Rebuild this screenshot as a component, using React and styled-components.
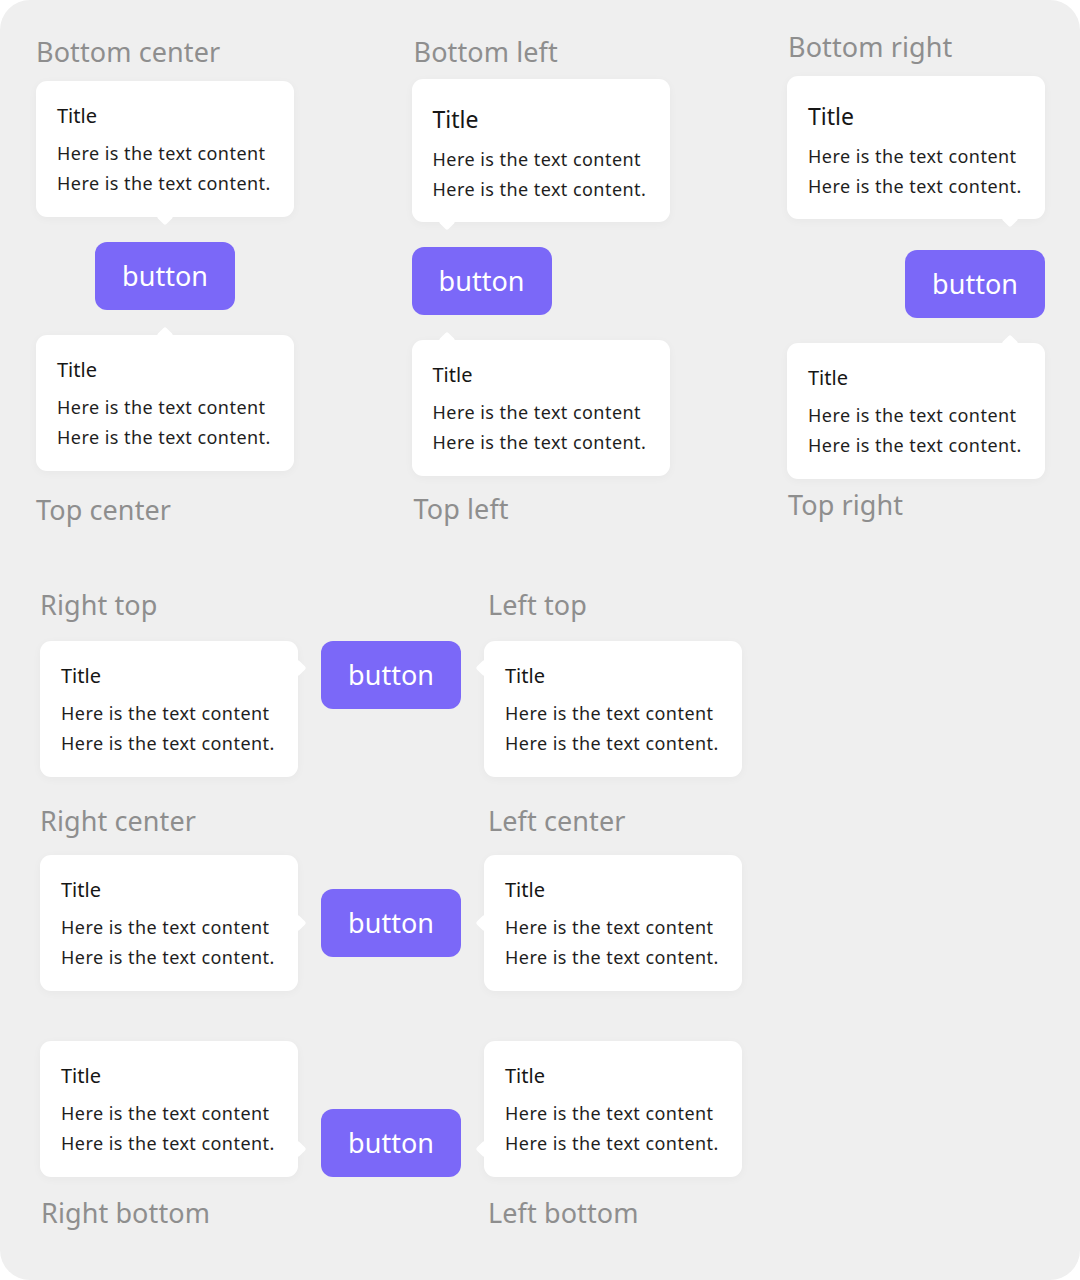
import React from 'react';
import styled, { createGlobalStyle, css } from 'styled-components';

const GlobalStyle = createGlobalStyle`
  body {
    margin: 0;
    background: #ffffff;
    font-family: "Noto Sans", "Liberation Sans", sans-serif;
  }
`;

const Panel = styled.div`
  width: 1080px;
  height: 1280px;
  box-sizing: border-box;
  background: #efefef;
  border-radius: 30px;
  overflow: hidden;
`;

const TopGrid = styled.div`
  display: grid;
  grid-template-columns: 258px 258px 258px;
  column-gap: 117.5px;
  align-items: start;
  padding-left: 36px;
`;

const Column = styled.div`
  display: flex;
  flex-direction: column;
  align-items: stretch;
  padding-top: ${p => p.$top}px;
`;

const Label = styled.div`
  font-size: 27px;
  line-height: 34px;
  letter-spacing: 0.1px;
  color: #8e8e8e;
  padding-left: ${p => p.$indent || 0}px;
  margin-top: ${p => p.$mt || 0}px;
  margin-bottom: ${p => p.$mb || 0}px;
`;

// arrow placement -> where the little rotated square sits
const arrowPlacement = {
  'bottom-center': css`bottom: -6px; left: 50%; margin-left: -6px;`,
  'bottom-left': css`bottom: -6px; left: 29px;`,
  'bottom-right': css`bottom: -6px; right: 29px;`,
  'top-center': css`top: -6px; left: 50%; margin-left: -6px;`,
  'top-left': css`top: -6px; left: 29px;`,
  'top-right': css`top: -6px; right: 29px;`,
  'right-top': css`right: -6px; top: 21px;`,
  'right-center': css`right: -6px; top: 50%; margin-top: -6px;`,
  'right-bottom': css`right: -6px; bottom: 22px;`,
  'left-top': css`left: -6px; top: 21px;`,
  'left-center': css`left: -6px; top: 50%; margin-top: -6px;`,
  'left-bottom': css`left: -6px; bottom: 22px;`,
};

const Card = styled.div`
  position: relative;
  box-sizing: border-box;
  width: 258px;
  background: #ffffff;
  border-radius: 11px;
  box-shadow: 0 2px 10px rgba(0, 0, 0, 0.035);
  padding: ${p => (p.$large ? '22px 20px 18px 21px' : '21px 20px 19px 21px')};
  margin-top: ${p => p.$mt || 0}px;

  &::after {
    content: '';
    position: absolute;
    width: 12px;
    height: 12px;
    background: #ffffff;
    border-radius: 2px;
    transform: rotate(45deg);
    ${p => arrowPlacement[p.$arrow]}
  }
`;

const Title = styled.div`
  font-size: ${p => (p.$large ? 23 : 20)}px;
  line-height: ${p => (p.$large ? 36 : 28)}px;
  color: #161616;
  margin-bottom: ${p => (p.$large ? 7 : 8)}px;
`;

const Text = styled.div`
  font-size: 18px;
  line-height: 30px;
  letter-spacing: 0.45px;
  color: #1e1e1e;
  white-space: nowrap;
`;

const Button = styled.button`
  box-sizing: border-box;
  width: 140px;
  height: 68px;
  border: none;
  border-radius: 12px;
  background: #7b68f8;
  color: #ffffff;
  font-family: "Noto Sans", "Liberation Sans", sans-serif;
  font-size: 27px;
  padding: 0 0 2px;
  margin-top: ${p => p.$mt || 0}px;
  align-self: ${p => p.$align || 'center'};
  cursor: pointer;
`;

const BottomArea = styled.div`
  padding-left: 40px;
  margin-top: 61px;
`;

const Row = styled.div`
  display: grid;
  grid-template-columns: 258px 140px 258px;
  column-gap: 23px;
  align-items: ${p => p.$align};
  margin-top: ${p => p.$mt || 0}px;
`;

const LabelRow = styled.div`
  display: grid;
  grid-template-columns: 258px 140px 258px;
  column-gap: 23px;
  margin-top: ${p => p.$mt || 0}px;
`;

const Spacer = styled.div``;

const Tooltip = ({ arrow, large, mt }) => (
  <Card $arrow={arrow} $large={large} $mt={mt}>
    <Title $large={large}>Title</Title>
    <Text>Here is the text content</Text>
    <Text>Here is the text content.</Text>
  </Card>
);

const topColumns = [
  { top: 35, label: 'Bottom center', labelGap: 12, large: false, arrowTop: 'bottom-center', btnGap: 25, align: 'center', arrowBottom: 'top-center', bottomLabel: 'Top center', bottomGap: 22, indent: 0 },
  { top: 35, label: 'Bottom left', labelGap: 10, large: true, arrowTop: 'bottom-left', btnGap: 25, align: 'flex-start', arrowBottom: 'top-left', bottomLabel: 'Top left', bottomGap: 16, indent: 2 },
  { top: 30, label: 'Bottom right', labelGap: 12, large: true, arrowTop: 'bottom-right', btnGap: 31, align: 'flex-end', arrowBottom: 'top-right', bottomLabel: 'Top right', bottomGap: 9, indent: 1 },
];

export default function App() {
  return (
    <>
      <GlobalStyle />
      <Panel>
        <TopGrid>
          {topColumns.map(col => (
            <Column key={col.label} $top={col.top}>
              <Label $indent={col.indent} $mb={col.labelGap}>{col.label}</Label>
              <Tooltip arrow={col.arrowTop} large={col.large} />
              <Button $mt={col.btnGap} $align={col.align}>button</Button>
              <Tooltip arrow={col.arrowBottom} mt={25} />
              <Label $indent={col.indent} $mt={col.bottomGap}>{col.bottomLabel}</Label>
            </Column>
          ))}
        </TopGrid>

        <BottomArea>
          <LabelRow>
            <Label>Right top</Label>
            <Spacer />
            <Label $indent={4}>Left top</Label>
          </LabelRow>
          <Row $align="start" $mt={19}>
            <Tooltip arrow="right-top" />
            <Button $align="start">button</Button>
            <Tooltip arrow="left-top" />
          </Row>

          <LabelRow $mt={27}>
            <Label>Right center</Label>
            <Spacer />
            <Label $indent={4}>Left center</Label>
          </LabelRow>
          <Row $align="center" $mt={17}>
            <Tooltip arrow="right-center" />
            <Button>button</Button>
            <Tooltip arrow="left-center" />
          </Row>

          <Row $align="end" $mt={50}>
            <Tooltip arrow="right-bottom" />
            <Button $align="end">button</Button>
            <Tooltip arrow="left-bottom" />
          </Row>
          <LabelRow $mt={19}>
            <Label $indent={1}>Right bottom</Label>
            <Spacer />
            <Label $indent={4}>Left bottom</Label>
          </LabelRow>
        </BottomArea>
      </Panel>
    </>
  );
}
